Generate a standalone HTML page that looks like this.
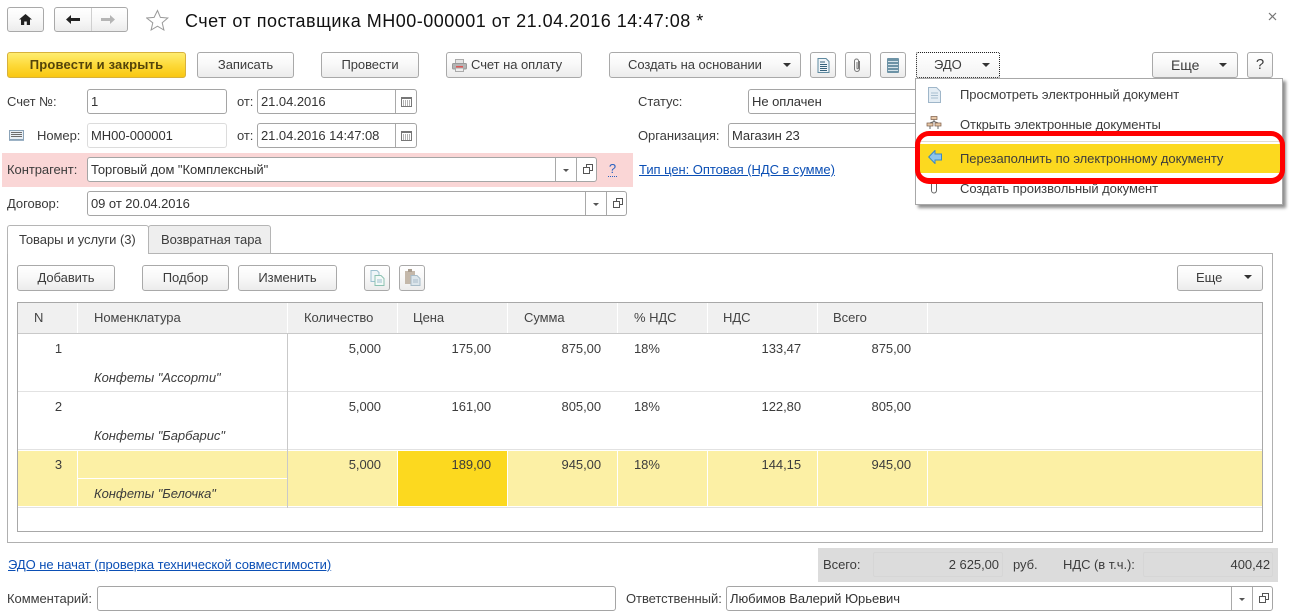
<!DOCTYPE html>
<html lang="ru"><head><meta charset="utf-8"><title>Счет</title>
<style>
html,body{margin:0;padding:0;background:#fff}
#p{position:relative;width:1289px;height:616px;overflow:hidden;background:#fff;font:13px/18px "Liberation Sans",Arial,sans-serif;color:#3c3c3c;letter-spacing:-.05px}
#p div,#p a,#p svg{position:absolute;box-sizing:border-box}
.t{white-space:nowrap}
.r{white-space:nowrap;text-align:right}
.b{border:1px solid #a9a9a9;border-radius:3px;background:linear-gradient(#fff,#f8f8f8 50%,#ececec);text-align:center;white-space:nowrap;height:26px;line-height:24px;color:#3c3c3c}
.i{border:1px solid #a5a5a5;border-radius:3px;background:#fff;height:25px;line-height:24px;padding-left:3px;white-space:nowrap;color:#333}
.v{width:1px;background:#a9a9a9}
.h{height:1px;background:#e2e2e2}
.l{color:#0b4fb5;text-decoration:underline;white-space:nowrap}
.tri{width:8px;height:4px;background:#333;clip-path:polygon(0 0,100% 0,50% 100%)}
.tr2{width:6px;height:3px;background:#555;clip-path:polygon(0 0,100% 0,50% 100%)}
.hc{background:#f0f0f0;height:30px;top:303px;line-height:30px;white-space:nowrap;color:#444}
</style></head><body><div id="p">

<!-- top nav -->
<div class="b" style="left:7px;top:7px;width:37px;height:25px"></div>
<svg style="left:19px;top:14px" width="13" height="11" viewBox="0 0 13 11"><path d="M6.500 0L0 5.500h2V11h3.200V7.500h2.600V11H11V5.500h2z" fill="#222"/></svg>
<div class="b" style="left:54px;top:7px;width:74px;height:25px"></div>
<div class="v" style="left:91px;top:8px;height:23px;background:#cfcfcf"></div>
<svg style="left:66px;top:15px" width="14" height="9" viewBox="0 0 14 9"><path d="M5 0L0 4.500 5 9V6h9V3H5z" fill="#222"/></svg>
<svg style="left:101px;top:15px" width="14" height="9" viewBox="0 0 14 9"><path d="M9 0l5 4.500L9 9V6H0V3h9z" fill="#b5b5b5"/></svg>
<svg style="left:146px;top:9px" width="23" height="23" viewBox="0 0 23 23"><path d="M11.500 1.500l2.900 6.900 7.400.6-5.600 4.800 1.700 7.200-6.400-3.800-6.400 3.800 1.700-7.200L.7 9l7.400-.6z" fill="#fff" stroke="#9a9a9a"/></svg>
<div class="t" style="left:185px;top:9px;font-size:18px;line-height:24px;color:#111;letter-spacing:.5px">Счет от поставщика МН00-000001 от 21.04.2016 14:47:08 *</div>
<svg style="left:1268px;top:12px" width="9" height="9" viewBox="0 0 9 9"><path d="M1 1l7 7M8 1L1 8" stroke="#777" stroke-width="1.2"/></svg>

<!-- command bar -->
<div class="b" style="left:7px;top:52px;width:179px;background:linear-gradient(#ffed70,#fdd835 55%,#f9c712);border-color:#d7b13c;font-weight:bold;color:#54440a;letter-spacing:.18px">Провести и закрыть</div>
<div class="b" style="left:197px;top:52px;width:97px">Записать</div>
<div class="b" style="left:321px;top:52px;width:98px">Провести</div>
<div class="b" style="left:446px;top:52px;width:136px;text-align:left;padding-left:24px">Счет на оплату</div>
<svg style="left:452px;top:59px" width="15" height="13" viewBox="0 0 15 13"><rect x="3.500" y=".5" width="8" height="4" fill="#e5e5e5" stroke="#aaa"/><rect x=".5" y="4.500" width="14" height="5.500" rx="1" fill="#b4b4b4" stroke="#999"/><rect x="3.500" y="9" width="8" height="3.500" fill="#eee" stroke="#aaa"/><rect x="4" y="7" width="7" height="1.500" fill="#d55"/></svg>
<div class="b" style="left:609px;top:52px;width:192px;text-align:left;padding-left:18px">Создать на основании</div>
<div class="tri" style="left:783px;top:63px"></div>
<div class="b" style="left:810px;top:52px;width:26px"></div>
<svg style="left:817px;top:58px" width="13" height="15" viewBox="0 0 13 15"><path d="M1 .5h8l3 3v11H1z" fill="#eef4f8" stroke="#5f8aa0"/><path d="M3 4h5M3 6.500h7M3 8.500h7M3 10.500h7M3 12.500h7" stroke="#35627c"/></svg>
<div class="b" style="left:845px;top:52px;width:26px"></div>
<svg style="left:853px;top:58px" width="9" height="15" viewBox="0 0 9 15"><path d="M6.500 3v8a2.500 2.500 0 0 1-5 0V3a2 2 0 0 1 4 0v7a.7.7 0 0 1-1.500 0V4" fill="none" stroke="#777" stroke-width="1"/></svg>
<div class="b" style="left:880px;top:52px;width:26px"></div>
<svg style="left:887px;top:58px" width="12" height="15" viewBox="0 0 12 15"><rect width="12" height="15" rx="1" fill="#6d93a6"/><path d="M1 3.500h10M1 6.500h10M1 9.500h10M1 12.500h10" stroke="#d5e3ea"/></svg>
<div class="b" style="left:916px;top:52px;width:84px;border:1px dotted #222;border-radius:2px;text-align:left;padding-left:17px;background:linear-gradient(#fff,#f3f3f3)">ЭДО</div>
<div class="tri" style="left:982px;top:63px"></div>
<div class="b" style="left:1152px;top:52px;width:86px;text-align:left;padding-left:18px;font-size:14px">Еще</div>
<div class="tri" style="left:1219px;top:63px"></div>
<div class="b" style="left:1247px;top:52px;width:26px;font-size:15px">?</div>

<!-- fields row 1 -->
<div class="t" style="left:7px;top:93px">Счет №:</div>
<div class="i" style="left:87px;top:89px;width:140px">1</div>
<div class="t" style="left:237px;top:93px">от:</div>
<div class="i" style="left:257px;top:89px;width:160px">21.04.2016</div>
<div class="v" style="left:395px;top:90px;height:23px"></div>
<svg style="left:401px;top:97px" width="11" height="10" viewBox="0 0 11 10"><rect x=".5" y=".5" width="10" height="9" fill="#fff" stroke="#777"/><path d="M.5 1.500h10" stroke="#777"/><path d="M2 4h7M2 6h7M2 8h7" stroke="#666" stroke-dasharray="1 1"/></svg>
<div class="t" style="left:638px;top:93px">Статус:</div>
<div class="i" style="left:748px;top:89px;width:200px">Не оплачен</div>

<!-- row 2 -->
<svg style="left:9px;top:130px" width="15" height="11" viewBox="0 0 15 11"><rect x=".5" y=".5" width="14" height="9" fill="#e9eff5" stroke="#8ba3b8"/><path d="M2 2.500h11M2 4.500h11M2 6.500h11" stroke="#6c6c6c"/><path d="M0 10.500h15" stroke="#9db3c6"/></svg>
<div class="t" style="left:37px;top:127px">Номер:</div>
<div class="i" style="left:87px;top:123px;width:140px;height:25px;border-color:#dcdcdc">МН00-000001</div>
<div class="t" style="left:237px;top:127px">от:</div>
<div class="i" style="left:257px;top:123px;width:160px">21.04.2016 14:47:08</div>
<div class="v" style="left:395px;top:124px;height:23px"></div>
<svg style="left:401px;top:131px" width="11" height="10" viewBox="0 0 11 10"><rect x=".5" y=".5" width="10" height="9" fill="#fff" stroke="#777"/><path d="M.5 1.500h10" stroke="#777"/><path d="M2 4h7M2 6h7M2 8h7" stroke="#666" stroke-dasharray="1 1"/></svg>
<div class="t" style="left:638px;top:127px">Организация:</div>
<div class="i" style="left:728px;top:123px;width:220px">Магазин 23</div>

<!-- row 3 -->
<div style="left:2px;top:153px;width:631px;height:34px;background:#fad6d6"></div>
<div class="t" style="left:7px;top:161px">Контрагент:</div>
<div class="i" style="left:87px;top:157px;width:510px">Торговый дом "Комплексный"</div>
<div class="v" style="left:555px;top:158px;height:23px"></div>
<div class="v" style="left:576px;top:158px;height:23px"></div>
<div class="tr2" style="left:563px;top:169px"></div>
<svg style="left:583px;top:164px" width="10" height="11" viewBox="0 0 10 11"><path d="M3.500 3V.5h6v6H7M.5 3.500h6v6h-6z" fill="none" stroke="#555"/></svg>
<div class="t" style="left:608px;top:161px;color:#2a62c0;border-bottom:1px dotted #2a62c0;line-height:15px;width:9px;text-align:center">?</div>
<a class="l" style="left:639px;top:161px">Тип цен: Оптовая (НДС в сумме)</a>

<!-- row 4 -->
<div class="t" style="left:7px;top:195px">Договор:</div>
<div class="i" style="left:87px;top:191px;width:540px">09 от 20.04.2016</div>
<div class="v" style="left:585px;top:192px;height:23px"></div>
<div class="v" style="left:606px;top:192px;height:23px"></div>
<div class="tr2" style="left:593px;top:203px"></div>
<svg style="left:613px;top:198px" width="10" height="11" viewBox="0 0 10 11"><path d="M3.500 3V.5h6v6H7M.5 3.500h6v6h-6z" fill="none" stroke="#555"/></svg>

<!-- tabs -->
<div style="left:7px;top:253px;width:1266px;height:290px;border:1px solid #b0b0b0"></div>
<div style="left:148px;top:225px;width:123px;height:29px;border:1px solid #b5b5b5;border-radius:3px 3px 0 0;background:#eeeeee;line-height:28px;padding-left:12px;white-space:nowrap">Возвратная тара</div>
<div style="left:7px;top:225px;width:142px;height:29px;border:1px solid #b5b5b5;border-bottom:0;border-radius:3px 3px 0 0;background:#fff;line-height:28px;padding-left:11px;white-space:nowrap">Товары и услуги (3)</div>

<!-- table toolbar -->
<div class="b" style="left:17px;top:265px;width:98px">Добавить</div>
<div class="b" style="left:142px;top:265px;width:87px">Подбор</div>
<div class="b" style="left:238px;top:265px;width:99px">Изменить</div>
<div class="b" style="left:364px;top:265px;width:26px"></div>
<svg style="left:370px;top:270px" width="15" height="16" viewBox="0 0 15 16"><path d="M1 .5h6l2 2v9H1z" fill="#eef5f8" stroke="#9cc0cf"/><path d="M5 5.500h6l3 3v7H5z" fill="#f3f9f7" stroke="#8cc2b2"/><path d="M7 10h5M7 12h5" stroke="#9cc0cf"/></svg>
<div class="b" style="left:399px;top:265px;width:26px"></div>
<svg style="left:404px;top:269px" width="17" height="17" viewBox="0 0 17 17"><rect x="1" y="2" width="10" height="13" fill="#c4b8aa"/><rect x="4" y="0" width="4" height="3" fill="#a89c8e"/><path d="M7 6.500h6l3 3v7H7z" fill="#dbe5eb" stroke="#a8bcc8"/><path d="M9 11h5M9 13h5" stroke="#a8bcc8"/></svg>
<div class="b" style="left:1177px;top:265px;width:86px;text-align:left;padding-left:18px">Еще</div>
<div class="tri" style="left:1244px;top:275px"></div>

<!-- table -->
<div style="left:17px;top:302px;width:1246px;height:230px;border:1px solid #a8a8a8;background:#fff"></div>
<div class="hc" style="left:18px;width:59px;padding-left:16px">N</div>
<div class="hc" style="left:78px;width:209px;padding-left:16px">Номенклатура</div>
<div class="hc" style="left:288px;width:109px;padding-left:16px">Количество</div>
<div class="hc" style="left:398px;width:109px;padding-left:15px">Цена</div>
<div class="hc" style="left:508px;width:109px;padding-left:16px">Сумма</div>
<div class="hc" style="left:618px;width:89px;padding-left:16px">% НДС</div>
<div class="hc" style="left:708px;width:109px;padding-left:15px">НДС</div>
<div class="hc" style="left:818px;width:109px;padding-left:15px">Всего</div>
<div class="hc" style="left:928px;width:334px"></div>
<div class="h" style="left:18px;top:333px;width:1244px;background:#c9c9c9"></div>
<div class="h" style="left:18px;top:391px;width:1244px"></div>
<div class="h" style="left:18px;top:449px;width:1244px"></div>

<!-- row 3 highlight -->
<div style="left:18px;top:451px;width:1244px;height:55px;background:#fcf0a5"></div>
<div style="left:398px;top:451px;width:109px;height:55px;background:#fcd91f"></div>
<div style="left:77px;top:451px;width:1px;height:55px;background:#fff"></div>
<div style="left:397px;top:451px;width:1px;height:55px;background:#fff"></div>
<div style="left:507px;top:451px;width:1px;height:55px;background:#fff"></div>
<div style="left:617px;top:451px;width:1px;height:55px;background:#fff"></div>
<div style="left:707px;top:451px;width:1px;height:55px;background:#fff"></div>
<div style="left:817px;top:451px;width:1px;height:55px;background:#fff"></div>
<div style="left:927px;top:451px;width:1px;height:55px;background:#fff"></div>
<div style="left:78px;top:478px;width:209px;height:1px;background:#fff"></div>
<div class="h" style="left:18px;top:507px;width:1244px"></div>
<div style="left:287px;top:333px;width:1px;height:175px;background:#c9c9c9"></div>

<div class="r" style="left:18px;top:340px;width:44px">1</div>
<div class="r" style="left:288px;top:340px;width:93px">5,000</div>
<div class="r" style="left:398px;top:340px;width:93px">175,00</div>
<div class="r" style="left:508px;top:340px;width:93px">875,00</div>
<div class="t" style="left:634px;top:340px">18%</div>
<div class="r" style="left:708px;top:340px;width:93px">133,47</div>
<div class="r" style="left:818px;top:340px;width:93px">875,00</div>
<div class="t" style="left:94px;top:369px;font-style:italic">Конфеты "Ассорти"</div>

<div class="r" style="left:18px;top:398px;width:44px">2</div>
<div class="r" style="left:288px;top:398px;width:93px">5,000</div>
<div class="r" style="left:398px;top:398px;width:93px">161,00</div>
<div class="r" style="left:508px;top:398px;width:93px">805,00</div>
<div class="t" style="left:634px;top:398px">18%</div>
<div class="r" style="left:708px;top:398px;width:93px">122,80</div>
<div class="r" style="left:818px;top:398px;width:93px">805,00</div>
<div class="t" style="left:94px;top:427px;font-style:italic">Конфеты "Барбарис"</div>

<div class="r" style="left:18px;top:456px;width:44px">3</div>
<div class="r" style="left:288px;top:456px;width:93px">5,000</div>
<div class="r" style="left:398px;top:456px;width:93px">189,00</div>
<div class="r" style="left:508px;top:456px;width:93px">945,00</div>
<div class="t" style="left:634px;top:456px">18%</div>
<div class="r" style="left:708px;top:456px;width:93px">144,15</div>
<div class="r" style="left:818px;top:456px;width:93px">945,00</div>
<div class="t" style="left:94px;top:485px;font-style:italic">Конфеты "Белочка"</div>

<!-- footer -->
<a class="l" style="left:8px;top:556px">ЭДО не начат (проверка технической совместимости)</a>
<div style="left:818px;top:548px;width:460px;height:34px;background:#dcdcdc"></div>
<div style="left:873px;top:552px;width:130px;height:25px;border:1px solid #d6d6d6;border-radius:2px"></div>
<div style="left:1143px;top:552px;width:130px;height:25px;border:1px solid #d6d6d6;border-radius:2px"></div>
<div class="t" style="left:823px;top:556px">Всего:</div>
<div class="r" style="left:873px;top:556px;width:126px">2 625,00</div>
<div class="t" style="left:1013px;top:556px">руб.</div>
<div class="t" style="left:1063px;top:556px">НДС (в т.ч.):</div>
<div class="r" style="left:1143px;top:556px;width:127px">400,42</div>
<div class="t" style="left:7px;top:590px">Комментарий:</div>
<div class="i" style="left:97px;top:586px;width:519px"></div>
<div class="t" style="left:626px;top:590px">Ответственный:</div>
<div class="i" style="left:726px;top:586px;width:547px">Любимов Валерий Юрьевич</div>
<div class="v" style="left:1231px;top:587px;height:23px"></div>
<div class="v" style="left:1252px;top:587px;height:23px"></div>
<div class="tr2" style="left:1239px;top:598px"></div>
<svg style="left:1259px;top:593px" width="10" height="11" viewBox="0 0 10 11"><path d="M3.500 3V.5h6v6H7M.5 3.500h6v6h-6z" fill="none" stroke="#555"/></svg>

<!-- dropdown -->
<div style="left:915px;top:78px;width:368px;height:127px;background:#fff;border:1px solid #a8a8a8;box-shadow:3px 3px 3px #8f8f8f"></div>
<svg style="left:928px;top:87px" width="13" height="16" viewBox="0 0 13 16"><path d="M.5.500h8l4 4v11H.5z" fill="#e4edf4" stroke="#9fb6c9"/><path d="M3 6h7M3 8.500h7M3 11h7" stroke="#a9bfd0"/></svg>
<div class="t" style="left:960px;top:86px">Просмотреть электронный документ</div>
<svg style="left:926px;top:116px" width="16" height="16" viewBox="0 0 16 16"><rect x="5" y=".5" width="6" height="3" fill="#e8c8a8" stroke="#7a5a45" stroke-width=".7"/><rect x="1" y="7" width="6" height="3" fill="#e8c8a8" stroke="#7a5a45" stroke-width=".7"/><path d="M8 3.500v2L4 7M8 5.500l4 1.500" fill="none" stroke="#666"/><rect x="9" y="7" width="6" height="3" fill="#e8c8a8" stroke="#7a5a45" stroke-width=".7"/><path d="M4 10v3M12 10v3" stroke="#666"/></svg>
<div class="t" style="left:960px;top:116px">Открыть электронные документы</div>
<div class="h" style="left:916px;top:141px;width:366px;background:#e3dcd0"></div>
<div style="left:919px;top:144px;width:361px;height:29px;background:#fcd91f"></div>
<svg style="left:928px;top:150px" width="14" height="14" viewBox="0 0 14 14"><path d="M7 .5L.7 7 7 13.500V10h6.500V4H7z" fill="#8ec4ea" stroke="#3a88c4"/></svg>
<div class="t" style="left:960px;top:150px">Перезаполнить по электронному документу</div>
<svg style="left:930px;top:183px" width="8" height="12" viewBox="0 0 8 12"><path d="M6.500 1v6.500a2.500 2.500 0 0 1-5 0V1" fill="none" stroke="#666"/></svg>
<div class="t" style="left:960px;top:180px">Создать произвольный документ</div>
<div style="left:915px;top:131px;width:370px;height:53px;border:5px solid #f00;border-bottom-width:6px;border-radius:14px"></div>
</div></body></html>
